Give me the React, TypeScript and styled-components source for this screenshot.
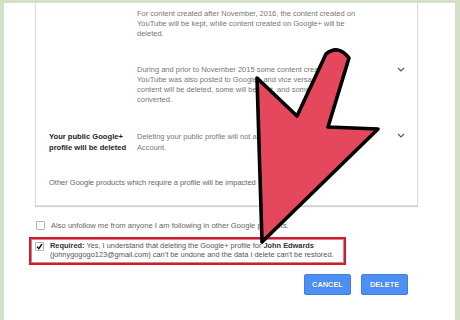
import React from 'react';
import styled, { createGlobalStyle } from 'styled-components';

const GlobalStyle = createGlobalStyle`
  html, body {
    margin: 0;
    padding: 0;
    background: #d3e2c6;
    font-family: "Liberation Sans", Arial, sans-serif;
    -webkit-font-smoothing: antialiased;
  }
`;

const Page = styled.div`
  position: relative;
  margin: 3px 0 0 4px;
  width: 451px;
  height: 317px;
  background: #ffffff;
  overflow: hidden;
  display: flex;
  flex-direction: column;
`;

const Card = styled.div`
  margin-left: 31px;
  width: 381px;
  background: #fff;
  border: 1px solid #dcdcdc;
  border-top: none;
  box-shadow: 0 1px 1px rgba(0, 0, 0, 0.18);
`;

const Row = styled.div<{ $top?: number; $bottom?: number; $lh?: number }>`
  display: grid;
  grid-template-columns: 88px 240px 1fr;
  padding: ${p => p.$top ?? 13}px 0 ${p => p.$bottom ?? 13}px 13px;
  font-size: 7.5px;
  line-height: ${p => p.$lh ?? 10}px;
  white-space: nowrap;
`;

const Label = styled.div`
  color: #1e1e1e;
  font-weight: bold;
  font-size: 7.6px;
`;

const Body = styled.div`
  color: #777;
`;

const Wide = styled.div`
  grid-column: 1 / 4;
  color: #666;
`;

const Chevron = styled.div`
  display: flex;
  justify-content: flex-end;
  padding: 2px 12px 0 0;
`;

const Options = styled.div`
  display: flex;
  flex-direction: column;
  margin-top: 15px;
`;

const CheckRow = styled.label`
  display: flex;
  align-items: center;
  gap: 6px;
  margin-left: 32px;
  font-size: 7.6px;
  color: #666;
`;

const Box = styled.span`
  flex: none;
  width: 7px;
  height: 7px;
  border: 1px solid #b5b5b5;
  background: #fff;
  border-radius: 1px;
  display: flex;
  align-items: center;
  justify-content: center;
`;

const Required = styled.div`
  margin: 7px 0 0 25px;
  width: 305px;
  height: 20px;
  border: 2px solid #c8202f;
  outline: 1px solid #e77a85;
  outline-offset: -3px;
  padding: 2px 4px 2px 4px;
  display: flex;
  gap: 6px;
  align-items: flex-start;
  font-size: 7.4px;
  line-height: 9px;
  color: #555;
  white-space: nowrap;

  b {
    color: #333;
  }
`;

const Buttons = styled.div`
  display: flex;
  justify-content: flex-end;
  gap: 10px;
  margin: 9px 47px 0 0;
`;

const Button = styled.button`
  width: 47px;
  height: 21px;
  border: 1px solid #3f7fe0;
  border-radius: 2px;
  background: #4d8ff2;
  color: #fff;
  font-family: "Liberation Sans", Arial, sans-serif;
  font-weight: bold;
  font-size: 7.4px;
  text-shadow: 0 0 1px rgba(0, 0, 0, 0.35);
  padding: 0;
`;

const Arrow = styled.svg`
  position: absolute;
  left: -4px;
  top: -3px;
  pointer-events: none;
`;

function Down() {
  return (
    <svg width="8" height="5" viewBox="0 0 8 5">
      <path d="M1 1 L4 4 L7 1" fill="none" stroke="#555" strokeWidth="1.1" />
    </svg>
  );
}

export default function App() {
  return (
    <>
      <GlobalStyle />
      <Page>
        <Card>
          <Row $top={6}>
            <div />
            <Body>
              For content created after November, 2016, the content created on<br />
              YouTube will be kept, while content created on Google+ will be<br />
              deleted.
            </Body>
          </Row>
          <Row>
            <div />
            <Body>
              During and prior to November 2015 some content created on<br />
              YouTube was also posted to Google+ and vice versa, this<br />
              content will be deleted, some will be kept, and some<br />
              converted.
            </Body>
            <Chevron><Down /></Chevron>
          </Row>
          <Row $lh={11}>
            <Label>Your public Google+<br />profile will be deleted</Label>
            <Body>
              Deleting your public profile will not affect your Google<br />
              Account.
            </Body>
            <Chevron><Down /></Chevron>
          </Row>
          <Row $top={12} $bottom={17}>
            <Wide>Other Google products which require a profile will be impacted</Wide>
          </Row>
        </Card>

        <Options>
          <CheckRow>
            <Box />
            Also unfollow me from anyone I am following in other Google products.
          </CheckRow>
          <Required>
            <Box style={{ marginTop: 1 }}>
              <svg width="7" height="7" viewBox="0 0 7 7">
                <path d="M1 3.6 L2.8 5.6 L6 1" fill="none" stroke="#111" strokeWidth="1.4" />
              </svg>
            </Box>
            <div>
              <b>Required:</b> Yes, I understand that deleting the Google+ profile for{' '}
              <b>John Edwards</b>
              <br />
              (johnygogogo123@gmail.com) can't be undone and the data I delete can't be restored.
            </div>
          </Required>
        </Options>

        <Buttons>
          <Button>CANCEL</Button>
          <Button>DELETE</Button>
        </Buttons>

        <Arrow width="460" height="320" viewBox="0 0 460 320">
          <path
            d="M326 54 Q338 44 349 58 L328 127 L378 129 L262 242 L257 78 L297 116 Z"
            fill="#e5485c"
            stroke="#000"
            strokeWidth="3.6"
            strokeLinejoin="round"
          />
        </Arrow>
      </Page>
    </>
  );
}
